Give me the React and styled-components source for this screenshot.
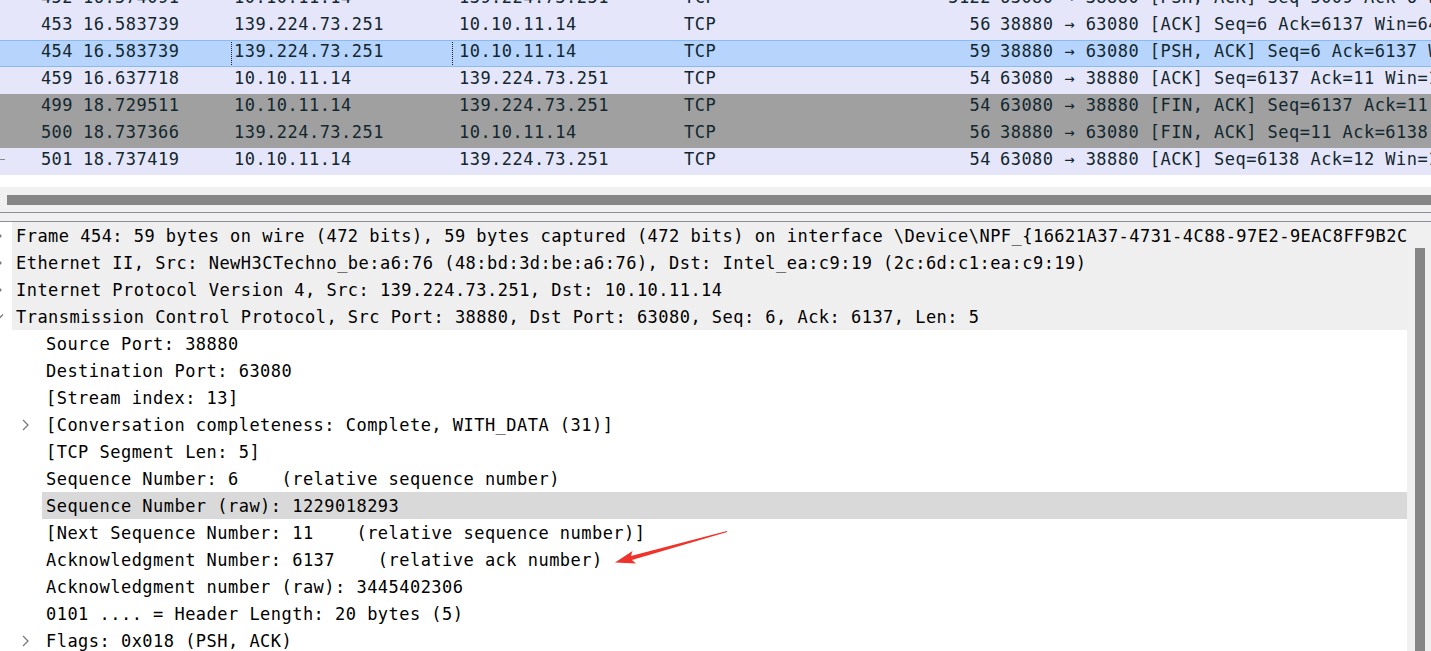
import React from "react";
import styled, { createGlobalStyle } from "styled-components";

const GlobalStyle = createGlobalStyle`
  html, body {
    margin: 0;
    padding: 0;
    background: #ffffff;
    overflow: hidden;
  }
  body {
    font-family: "DejaVu Sans Mono", "Liberation Mono", monospace;
  }
`;

const packets = [
  { no: "452", time: "16.574091", src: "10.10.11.14", dst: "139.224.73.251", proto: "TCP", len: "5122", info: "63080 → 38880 [PSH, ACK] Seq=5009 Ack=6 Win=64240 Len=5068" },
  { no: "453", time: "16.583739", src: "139.224.73.251", dst: "10.10.11.14", proto: "TCP", len: "56", info: "38880 → 63080 [ACK] Seq=6 Ack=6137 Win=64240 Len=0" },
  { no: "454", time: "16.583739", src: "139.224.73.251", dst: "10.10.11.14", proto: "TCP", len: "59", info: "38880 → 63080 [PSH, ACK] Seq=6 Ack=6137 Win=64240 Len=5", tone: "selected" },
  { no: "459", time: "16.637718", src: "10.10.11.14", dst: "139.224.73.251", proto: "TCP", len: "54", info: "63080 → 38880 [ACK] Seq=6137 Ack=11 Win=131328 Len=0" },
  { no: "499", time: "18.729511", src: "10.10.11.14", dst: "139.224.73.251", proto: "TCP", len: "54", info: "63080 → 38880 [FIN, ACK] Seq=6137 Ack=11 Win=131328 Len=0", tone: "fin" },
  { no: "500", time: "18.737366", src: "139.224.73.251", dst: "10.10.11.14", proto: "TCP", len: "56", info: "38880 → 63080 [FIN, ACK] Seq=11 Ack=6138 Win=64240 Len=0", tone: "fin" },
  { no: "501", time: "18.737419", src: "10.10.11.14", dst: "139.224.73.251", proto: "TCP", len: "54", info: "63080 → 38880 [ACK] Seq=6138 Ack=12 Win=131328 Len=0", related: true },
];

const tree = [
  { level: 0, tone: "head", chevron: "right", text: "Frame 454: 59 bytes on wire (472 bits), 59 bytes captured (472 bits) on interface \\Device\\NPF_{16621A37-4731-4C88-97E2-9EAC8FF9B2C5}, id 0" },
  { level: 0, tone: "head", chevron: "right", text: "Ethernet II, Src: NewH3CTechno_be:a6:76 (48:bd:3d:be:a6:76), Dst: Intel_ea:c9:19 (2c:6d:c1:ea:c9:19)" },
  { level: 0, tone: "head", chevron: "right", text: "Internet Protocol Version 4, Src: 139.224.73.251, Dst: 10.10.11.14" },
  { level: 0, tone: "head", chevron: "down", text: "Transmission Control Protocol, Src Port: 38880, Dst Port: 63080, Seq: 6, Ack: 6137, Len: 5" },
  { level: 1, text: "Source Port: 38880" },
  { level: 1, text: "Destination Port: 63080" },
  { level: 1, text: "[Stream index: 13]" },
  { level: 1, chevron: "right", text: "[Conversation completeness: Complete, WITH_DATA (31)]" },
  { level: 1, text: "[TCP Segment Len: 5]" },
  { level: 1, text: "Sequence Number: 6    (relative sequence number)" },
  { level: 1, tone: "selected", text: "Sequence Number (raw): 1229018293" },
  { level: 1, text: "[Next Sequence Number: 11    (relative sequence number)]" },
  { level: 1, text: "Acknowledgment Number: 6137    (relative ack number)" },
  { level: 1, text: "Acknowledgment number (raw): 3445402306" },
  { level: 1, text: "0101 .... = Header Length: 20 bytes (5)" },
  { level: 1, chevron: "right", text: "Flags: 0x018 (PSH, ACK)" },
];

const rowBg = {
  normal: "#e6e6fa",
  selected: "#b7d5fc",
  fin: "#a0a0a0",
};

export default function App() {
  return (
    <Page>
      <GlobalStyle />
      <PacketList>
        {packets.map((p) => (
          <PacketRow key={p.no} $tone={p.tone || "normal"}>
            <NoCell>
              {p.related ? <RelatedMark /> : <span />}
              {p.no}
            </NoCell>
            <Cell>{p.time}</Cell>
            <Cell $focused={p.tone === "selected"}>{p.src}</Cell>
            <Cell>{p.dst}</Cell>
            <Cell>{p.proto}</Cell>
            <LenCell>{p.len}</LenCell>
            <InfoCell>{p.info}</InfoCell>
          </PacketRow>
        ))}
      </PacketList>

      <Gap />
      <HScroll>
        <HThumb />
      </HScroll>
      <Splitter />

      <DetailPane>
        <Tree>
          {tree.map((r, i) => (
            <TreeRow key={i}>
              <Gutter $level={r.level}>
                {r.chevron && <Chevron dir={r.chevron} level={r.level} />}
              </Gutter>
              <Label $tone={r.tone}>{r.text}</Label>
            </TreeRow>
          ))}
        </Tree>
        <VScroll>
          <VThumb />
        </VScroll>
      </DetailPane>

      <Arrow viewBox="0 0 135 45" width="135" height="45">
        <polygon
          points="15,37.5 32.5,25.9 30.9,31 126.8,5.9 127.2,7.1 31.9,34.9 36,38.4"
          fill="#f0332a"
        />
      </Arrow>
    </Page>
  );
}

function Chevron({ dir, level }) {
  return (
    <ChevronSvg width="10" height="12" viewBox="0 0 10 12" $level={level}>
      {dir === "down" ? (
        <polyline points="1,3.5 5,7.5 9,3.5" fill="none" stroke="#7a7a7a" strokeWidth="1.3" />
      ) : (
        <polyline points="2,1 7,6 2,11" fill="none" stroke="#7a7a7a" strokeWidth="1.3" />
      )}
    </ChevronSvg>
  );
}

const Page = styled.div`
  position: relative;
  width: 1431px;
  height: 651px;
  overflow: hidden;
  display: flex;
  flex-direction: column;
  font-family: "DejaVu Sans Mono", "Liberation Mono", monospace;
  font-size: 17px;
  letter-spacing: 0.47px;
`;

const PacketList = styled.div`
  margin-top: -14px;
  display: flex;
  flex-direction: column;
`;

const PacketRow = styled.div`
  display: grid;
  grid-template-columns: 80px 151px 225px 225px 200px 116px 1fr;
  height: 27px;
  box-sizing: border-box;
  line-height: 20px;
  color: #12272e;
  white-space: pre;
  background: ${(p) => rowBg[p.$tone]};
  border-top: 1px solid ${(p) => (p.$tone === "selected" ? "#86bbf4" : "transparent")};
  border-bottom: 1px solid ${(p) => (p.$tone === "selected" ? "#86bbf4" : "transparent")};
`;

const Cell = styled.div`
  position: relative;
  padding-left: 3px;
  overflow: hidden;

  &::after {
    content: "";
    display: ${(p) => (p.$focused ? "block" : "none")};
    position: absolute;
    left: 0;
    right: 3px;
    top: -1px;
    bottom: -1px;
    border: 1px dotted #222;
  }
`;

const NoCell = styled.div`
  display: flex;
  justify-content: space-between;
  align-items: center;
  padding-right: 7px;
  height: 20px;
`;

const RelatedMark = styled.span`
  width: 5px;
  height: 1px;
  background: #8a8a8a;
`;

const LenCell = styled.div`
  text-align: right;
  padding-right: 6px;
`;

const InfoCell = styled.div`
  padding-left: 3px;
  overflow: hidden;
`;

const Gap = styled.div`
  height: 12px;
  flex-shrink: 0;
  background: #ffffff;
`;

const HScroll = styled.div`
  height: 25px;
  flex-shrink: 0;
  background: #f0f0f0;
  padding: 8px 0 0 7px;
  box-sizing: border-box;
`;

const HThumb = styled.div`
  height: 10px;
  background: #868686;
`;

const Splitter = styled.div`
  height: 10px;
  flex-shrink: 0;
  box-sizing: border-box;
  background: #f0f0f0;
  border-top: 1px solid #8d8d9c;
  border-bottom: 1px solid #8d8d9c;
`;

const DetailPane = styled.div`
  flex: 1;
  display: flex;
  min-height: 0;
`;

const Tree = styled.div`
  flex: 1;
  min-width: 0;
  overflow: hidden;
  color: #000;
  background: #ffffff;
`;

const TreeRow = styled.div`
  display: flex;
  height: 27px;
`;

const Gutter = styled.div`
  width: ${(p) => (p.$level === 0 ? 12 : 42)}px;
  flex-shrink: 0;
  display: flex;
  align-items: center;
  overflow: hidden;
`;

const ChevronSvg = styled.svg`
  flex-shrink: 0;
  margin-left: ${(p) => (p.$level === 0 ? -6 : 21)}px;
`;

const Label = styled.div`
  flex: 1;
  min-width: 0;
  padding: 1px 0 0 4px;
  line-height: 26px;
  white-space: pre;
  overflow: hidden;
  background: ${(p) =>
    p.$tone === "head" ? "#efefef" : p.$tone === "selected" ? "#d9d9d9" : "#ffffff"};
`;

const VScroll = styled.div`
  width: 24px;
  flex-shrink: 0;
  background: #f0f0f0;
  padding: 26px 6px 0 8px;
  box-sizing: border-box;
`;

const VThumb = styled.div`
  height: 100%;
  background: #868686;
`;

const Arrow = styled.svg`
  position: absolute;
  left: 600px;
  top: 525px;
`;
